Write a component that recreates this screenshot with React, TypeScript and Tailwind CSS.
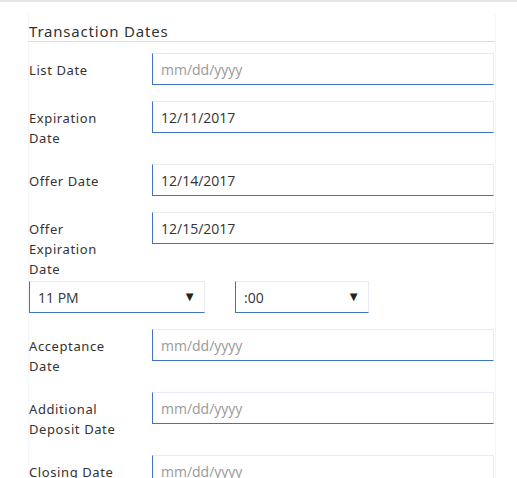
import React from 'react';

interface DateRowProps {
    label: string;
    value?: string;
}

const inputCls =
    "h-8 w-[342px] shrink-0 border border-[#e8ebf3] border-l-[#3f72c0] border-b-[#3f72c0] bg-white px-2 text-[14px] text-[#333] outline-none placeholder:text-[#999]";

const DateRow: React.FC<DateRowProps & { children?: React.ReactNode }> = ({ label, value, children }) => (
    <div className="mb-4">
        <div className="flex">
            <div className="w-[123px] shrink-0 pt-[7px] pr-[28px] text-[13px] leading-5 tracking-[0.6px] text-[#333]">
                {label}
            </div>
            <input
                type="text"
                readOnly
                defaultValue={value}
                placeholder="mm/dd/yyyy"
                className={inputCls}
                style={{ fontFamily: '"Open Sans", sans-serif' }}
            />
        </div>
        {children}
    </div>
);

const SelectBox: React.FC<{ value: string; width: string }> = ({ value, width }) => (
    <div className={`flex h-8 items-center justify-between border border-[#e8ebf3] border-l-[#3f72c0] border-b-[#3f72c0] bg-white pl-2 pr-[8px] text-[14px] text-[#333] ${width}`}>
        <span style={{ fontFamily: '"Open Sans", sans-serif' }}>{value}</span>
        <span className="text-[13px] text-[#222]">▼</span>
    </div>
);

const App: React.FC = () => {
    return (
        <div className="min-h-[478px] w-[517px] border-t-2 border-[#e6e6e6] bg-white" style={{ fontFamily: '"Noto Sans", sans-serif' }}>
            <div className="ml-[28px] mt-[12px] w-[468px] border-x border-[#f4f5f8] pt-[8px]">
                <h3 className="mb-[11px] border-b border-[#dddddd] text-[15px] leading-[19px] tracking-[0.8px] text-[#333]">
                    Transaction Dates
                </h3>
                <DateRow label="List Date" />
                <DateRow label="Expiration Date" value="12/11/2017" />
                <DateRow label="Offer Date" value="12/14/2017" />
                <DateRow label="Offer Expiration Date" value="12/15/2017">
                    <div className="mt-[2px] flex gap-[30px]">
                        <SelectBox value="11 PM" width="w-[176px]" />
                        <SelectBox value=":00" width="w-[134px]" />
                    </div>
                </DateRow>
                <DateRow label="Acceptance Date" />
                <DateRow label="Additional Deposit Date" />
                <DateRow label="Closing Date" />
            </div>
        </div>
    );
};

export default App;
